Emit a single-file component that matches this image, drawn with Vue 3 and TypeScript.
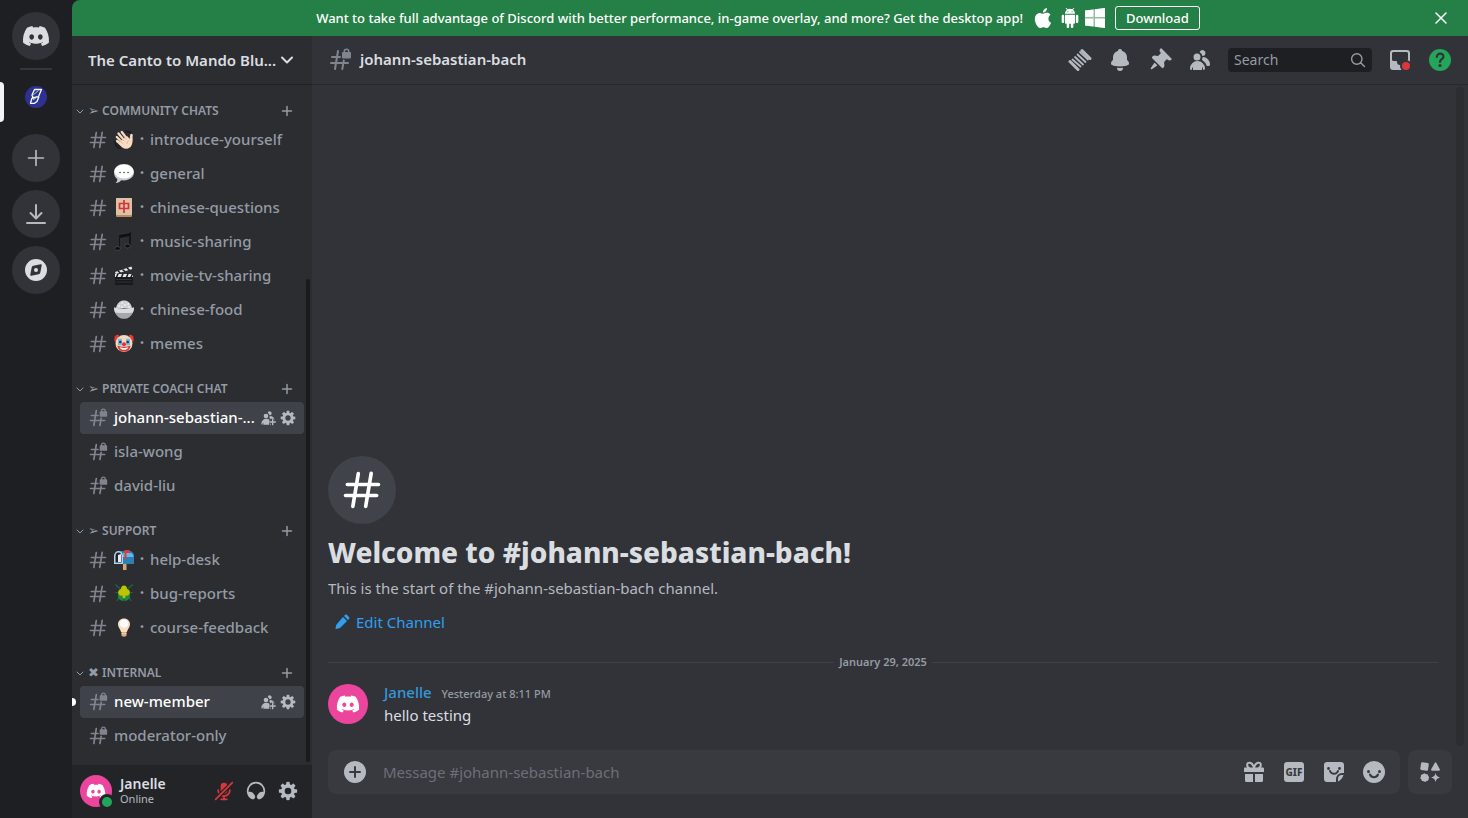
<script setup lang="ts">
import { ref } from 'vue'

interface Channel {
  name: string
  emoji?: string
  locked?: boolean
  active?: boolean
  unread?: boolean
}

interface Category {
  mark: string
  title: string
  channels: Channel[]
}

const categories: Category[] = [
  {
    mark: '➢',
    title: 'Community chats',
    channels: [
      { name: 'introduce-yourself', emoji: 'wave' },
      { name: 'general', emoji: 'speech' },
      { name: 'chinese-questions', emoji: 'tile' },
      { name: 'music-sharing', emoji: 'music' },
      { name: 'movie-tv-sharing', emoji: 'clapper' },
      { name: 'chinese-food', emoji: 'rice' },
      { name: 'memes', emoji: 'clown' },
    ],
  },
  {
    mark: '➢',
    title: 'Private coach chat',
    channels: [
      { name: 'johann-sebastian-...', locked: true, active: true },
      { name: 'isla-wong', locked: true },
      { name: 'david-liu', locked: true },
    ],
  },
  {
    mark: '➢',
    title: 'Support',
    channels: [
      { name: 'help-desk', emoji: 'mailbox' },
      { name: 'bug-reports', emoji: 'beetle' },
      { name: 'course-feedback', emoji: 'bulb' },
    ],
  },
  {
    mark: '✖',
    title: 'Internal',
    channels: [
      { name: 'new-member', locked: true, active: true, unread: true },
      { name: 'moderator-only', locked: true },
    ],
  },
]

const toolbar = [
  { icon: 'threads', label: 'Threads' },
  { icon: 'bell', label: 'Notification settings' },
  { icon: 'pin', label: 'Pinned messages' },
  { icon: 'members', label: 'Show member list' },
]

const composerActions = [
  { icon: 'sticker', label: 'Open sticker picker' },
  { icon: 'smile', label: 'Select emoji' },
]

const channelName = 'johann-sebastian-bach'
const query = ref('')
const draft = ref('')
</script>

<template>
  <svg class="sprite" aria-hidden="true">
    <defs>
      <mask id="add-cut" maskUnits="userSpaceOnUse" x="0" y="0" width="24" height="24">
        <rect width="24" height="24" fill="#fff" />
        <path d="M19 13v10M14 18h10" stroke="#000" stroke-width="5" />
      </mask>
      <mask id="mic-cut" maskUnits="userSpaceOnUse" x="0" y="0" width="24" height="24">
        <rect width="24" height="24" fill="#fff" />
        <path d="M2 22L22 2" stroke="#000" stroke-width="5" />
      </mask>
      <mask id="badge-cut" maskUnits="userSpaceOnUse" x="0" y="0" width="24" height="24">
        <rect width="24" height="24" fill="#fff" />
        <circle cx="18" cy="18" r="6" fill="#000" />
      </mask>
    </defs>
    <symbol id="i-logo" viewBox="0 0 24 24">
      <path d="M19.73 4.87a18.2 18.2 0 0 0-4.6-1.44c-.21.4-.4.8-.58 1.21-1.69-.25-3.4-.25-5.1 0-.18-.41-.37-.82-.59-1.2-1.6.27-3.14.75-4.6 1.43A19.04 19.04 0 0 0 .96 17.7a18.43 18.43 0 0 0 5.63 2.87c.46-.62.86-1.28 1.2-1.98-.65-.25-1.29-.55-1.9-.92.17-.12.32-.24.47-.37 3.58 1.7 7.7 1.7 11.28 0l.46.37c-.6.36-1.25.67-1.9.92.35.7.75 1.35 1.2 1.98 2.03-.63 3.94-1.6 5.64-2.87.47-4.87-.78-9.09-3.3-12.83ZM8.3 15.12c-1.1 0-2-1.02-2-2.27 0-1.24.88-2.26 2-2.26s2.02 1.02 2 2.26c0 1.25-.89 2.27-2 2.27Zm7.4 0c-1.1 0-2-1.02-2-2.27 0-1.24.88-2.26 2-2.26s2.02 1.02 2 2.26c0 1.25-.88 2.27-2 2.27Z" />
    </symbol>
    <symbol id="i-plus" viewBox="0 0 24 24">
      <path d="M12 3v18M3 12h18" fill="none" stroke="currentColor" stroke-width="2" stroke-linecap="round" />
    </symbol>
    <symbol id="i-plus-bold" viewBox="0 0 18 18">
      <path d="M9 4.500v9M4.500 9h9" fill="none" stroke="currentColor" stroke-width="1.500" stroke-linecap="round" />
    </symbol>
    <symbol id="i-download" viewBox="0 0 24 24">
      <path d="M12 3v13M6.500 11l5.500 5.500 5.500-5.500M3 21h18" fill="none" stroke="currentColor" stroke-width="2" stroke-linecap="round" stroke-linejoin="round" />
    </symbol>
    <symbol id="i-compass" viewBox="0 0 24 24">
      <path fill-rule="evenodd" d="M23 12a11 11 0 1 1-22 0 11 11 0 0 1 22 0ZM7.74 9.3A2 2 0 0 1 9.3 7.75l7.22-1.45a1 1 0 0 1 1.18 1.18l-1.45 7.22a2 2 0 0 1-1.57 1.57l-7.22 1.45a1 1 0 0 1-1.18-1.18L7.74 9.3Z" />
      <circle cx="12" cy="12" r="2" />
    </symbol>
    <symbol id="i-chevron" viewBox="0 0 18 18">
      <path d="M4 6.500l5 5 5-5" fill="none" stroke="currentColor" stroke-width="2" stroke-linecap="round" stroke-linejoin="round" />
    </symbol>
    <symbol id="i-chevron-small" viewBox="0 0 12 12">
      <path d="M3 5l3 3 3-3" fill="none" stroke="currentColor" stroke-linecap="round" stroke-linejoin="round" />
    </symbol>
    <symbol id="i-hash" viewBox="0 0 24 24">
      <path fill-rule="evenodd" d="M10.99 3.16A1 1 0 1 0 9 2.84L8.15 8H4a1 1 0 0 0 0 2h3.82l-.67 4H3a1 1 0 1 0 0 2h3.82l-.8 4.84a1 1 0 0 0 1.97.32L8.85 16h4.97l-.8 4.84a1 1 0 0 0 1.97.32l.86-5.16H20a1 1 0 1 0 0-2h-3.82l.67-4H21a1 1 0 1 0 0-2h-3.82l.8-4.84a1 1 0 1 0-1.97-.32L15.15 8h-4.97l.8-4.84ZM14.15 14l.67-4H9.85l-.67 4h4.97Z" />
    </symbol>
    <symbol id="i-hash-lock" viewBox="0 0 24 24">
      <path fill-rule="evenodd" d="M15.500 4v-.5a3 3 0 0 1 6 0V4h.5a1 1 0 0 1 1 1v4.500a1 1 0 0 1-1 1h-7a1 1 0 0 1-1-1V5a1 1 0 0 1 1-1Zm4.500-.5V4h-3v-.5a1.500 1.500 0 1 1 3 0Z" />
      <path d="M10 3L7 21M4 9h8M3 15h17M15.800 12.500l-1.500 8.500" fill="none" stroke="currentColor" stroke-width="2" stroke-linecap="round" />
    </symbol>
    <symbol id="i-gear" viewBox="0 0 24 24">
      <path fill-rule="evenodd" d="M10.56 1.1c-.46.05-.7.53-.64.98.18 1.16-.19 2.2-.98 2.53-.8.33-1.79-.15-2.49-1.1-.27-.36-.78-.52-1.14-.24-.77.59-1.45 1.27-2.04 2.04-.28.36-.12.87.24 1.14.96.7 1.43 1.7 1.1 2.49-.33.8-1.37 1.16-2.53.98-.45-.07-.93.18-.99.64a11.1 11.1 0 0 0 0 2.88c.06.46.54.7.99.64 1.16-.18 2.2.19 2.53.98.33.8-.14 1.79-1.1 2.49-.36.27-.52.78-.24 1.14.59.77 1.27 1.45 2.04 2.04.36.28.87.12 1.14-.24.7-.95 1.7-1.43 2.49-1.1.8.33 1.16 1.37.98 2.53-.07.45.18.93.64.99a11.1 11.1 0 0 0 2.88 0c.46-.06.7-.54.64-.99-.18-1.16.19-2.2.98-2.53.8-.33 1.79.14 2.49 1.1.27.36.78.52 1.14.24.77-.59 1.45-1.27 2.04-2.04.28-.36.12-.87-.24-1.14-.96-.7-1.43-1.7-1.1-2.49.33-.8 1.37-1.16 2.53-.98.45.07.93-.18.99-.64a11.1 11.1 0 0 0 0-2.88c-.06-.46-.54-.7-.99-.64-1.16.18-2.2-.19-2.53-.98-.33-.8.14-1.79 1.1-2.49.36-.27.52-.78.24-1.14a11.07 11.07 0 0 0-2.04-2.04c-.36-.28-.87-.12-1.14.24-.7.96-1.7 1.43-2.49 1.1-.8-.33-1.16-1.37-.98-2.53.07-.45-.18-.93-.64-.99a11.1 11.1 0 0 0-2.88 0ZM16 12a4 4 0 1 1-8 0 4 4 0 0 1 8 0Z" />
    </symbol>
    <symbol id="i-members" viewBox="0 0 24 24">
      <path d="M14.5 8a3 3 0 1 0-2.7-4.3c-.2.4.06.86.44 1.12a5 5 0 0 1 2.14 3.08c.01.06.06.1.12.1ZM18.44 17.27c.15.43.54.73 1 .73h1.06c.83 0 1.5-.67 1.5-1.5a7.5 7.5 0 0 0-6.5-7.43c-.55-.08-.99.38-1.1.92-.06.3-.15.6-.26.87-.23.58-.05 1.3.47 1.63a9.53 9.53 0 0 1 3.83 4.78ZM12.5 9a3.5 3.5 0 1 1-7 0 3.5 3.5 0 0 1 7 0ZM2 20.5a7.5 7.5 0 0 1 15 0c0 .83-.67 1.5-1.5 1.5a.2.2 0 0 1-.2-.16c-.2-.96-.56-1.87-.88-2.54-.1-.23-.42-.15-.42.1v2.1a.5.5 0 0 1-.5.5h-8a.5.5 0 0 1-.5-.5v-2.1c0-.25-.31-.33-.42-.1-.32.67-.67 1.58-.88 2.54a.2.2 0 0 1-.2.16A1.5 1.5 0 0 1 2 20.5Z" />
    </symbol>
    <symbol id="i-add-member" viewBox="0 0 24 24">
      <g mask="url(#add-cut)">
        <use href="#i-members" width="24" height="24" />
      </g>
      <path d="M19 14v8M15 18h8" fill="none" stroke="currentColor" stroke-width="2" stroke-linecap="round" />
    </symbol>
    <symbol id="i-threads" viewBox="0 0 24 24">
      <g fill="none" stroke="currentColor" stroke-linecap="round">
        <path d="M14 2.500l8 8M2 13.500l8 8" stroke-width="3" />
        <path d="M4.500 11.500l8 7M7 9l8 7.500M9.500 6.500l8 7.500M12 4l8 7.500" stroke-width="1.800" />
      </g>
    </symbol>
    <symbol id="i-bell" viewBox="0 0 24 24">
      <path d="M9.7 2.89c.18-.07.32-.24.37-.43a2 2 0 0 1 3.86 0c.05.2.19.36.38.43A7 7 0 0 1 19 9.5v2.09c0 .12.05.24.13.33l1.1 1.22a3 3 0 0 1 .77 2.01v.28c0 .67-.34 1.29-.95 1.56-1.31.6-4 1.51-8.05 1.51-4.05 0-6.74-.91-8.05-1.5-.61-.28-.95-.9-.95-1.57v-.28a3 3 0 0 1 .77-2l1.1-1.23a.5.5 0 0 0 .13-.33V9.5a7 7 0 0 1 4.7-6.61ZM9.18 19.84A.16.16 0 0 0 9 20a3 3 0 1 0 6 0c0-.1-.09-.17-.18-.16a24.86 24.86 0 0 1-5.64 0Z" />
    </symbol>
    <symbol id="i-pin" viewBox="0 0 24 24">
      <path d="M19.38 11.38a3 3 0 0 0 4.24 0l.03-.03a.5.5 0 0 0 0-.7L13.35.35a.5.5 0 0 0-.7 0l-.03.03a3 3 0 0 0 0 4.24L13 5l-2.92 2.92-3.65-.34a2 2 0 0 0-1.6.58l-.62.63a1 1 0 0 0 0 1.42l9.58 9.58a1 1 0 0 0 1.42 0l.63-.63a2 2 0 0 0 .58-1.6l-.34-3.64L19 11l.38.38ZM9.07 17.07a.5.5 0 0 1-.08.77l-5.15 3.43a.5.5 0 0 1-.63-.06l-.42-.42a.5.5 0 0 1-.06-.63L6.16 15a.5.5 0 0 1 .77-.08l2.14 2.14Z" />
    </symbol>
    <symbol id="i-search" viewBox="0 0 16 16">
      <path d="M12 7a5.200 5.200 0 1 1-10.400 0a5.200 5.200 0 0 1 10.400 0ZM10.700 10.700L14.500 14.500" fill="none" stroke="currentColor" stroke-width="1.400" stroke-linecap="round" />
    </symbol>
    <symbol id="i-inbox" viewBox="0 0 24 24">
      <path mask="url(#badge-cut)" fill-rule="evenodd" d="M5 2a3 3 0 0 0-3 3v14a3 3 0 0 0 3 3h14a3 3 0 0 0 3-3V5a3 3 0 0 0-3-3H5ZM4 5.5C4 4.670 4.670 4 5.500 4h13c.83 0 1.500.67 1.500 1.500v6c0 .83-.67 1.500-1.500 1.500h-2.650c-.5 0-.85.5-.85 1a3 3 0 1 1-6 0c0-.5-.35-1-.85-1H5.500A1.500 1.500 0 0 1 4 11.500v-6Z" />
      <circle cx="18" cy="18" r="4" fill="#da373c" />
    </symbol>
    <symbol id="i-help" viewBox="0 0 24 24">
      <circle cx="12" cy="12" r="11" />
      <path d="M8.800 9c0-4.600 6.800-4.200 6.600-.3-.1 2.600-3.400 2.500-3.400 5.300" fill="none" stroke="#313338" stroke-width="2.200" stroke-linecap="round" />
      <circle cx="12" cy="17.500" r="1.500" fill="#313338" />
    </symbol>
    <symbol id="i-close" viewBox="0 0 18 18">
      <path d="M4 4l10 10M14 4L4 14" fill="none" stroke="currentColor" stroke-width="1.500" stroke-linecap="round" />
    </symbol>
    <symbol id="i-apple" viewBox="0 0 24 24">
      <path d="M18.71 19.5c-.83 1.24-1.71 2.45-3.05 2.47-1.34.03-1.77-.79-3.29-.79-1.53 0-2 .77-3.27.82-1.31.05-2.3-1.32-3.14-2.53C4.25 17 2.94 12.45 4.7 9.39c.87-1.52 2.43-2.48 4.12-2.51 1.28-.02 2.5.87 3.29.87.78 0 2.26-1.07 3.81-.91.65.03 2.47.26 3.64 1.98-.09.06-2.17 1.28-2.15 3.81.03 3.02 2.65 4.03 2.68 4.04-.03.07-.42 1.44-1.38 2.83M13 3.5c.73-.83 1.94-1.46 2.94-1.5.13 1.17-.34 2.35-1.04 3.19-.69.85-1.83 1.51-2.95 1.42-.15-1.15.41-2.35 1.05-3.11z" />
    </symbol>
    <symbol id="i-android" viewBox="0 0 24 24">
      <path d="M6 18c0 .55.45 1 1 1h1v3.5c0 .83.67 1.5 1.5 1.5s1.5-.67 1.5-1.5V19h2v3.5c0 .83.67 1.5 1.5 1.5s1.5-.67 1.5-1.5V19h1c.55 0 1-.45 1-1V8H6v10zM3.5 8C2.67 8 2 8.67 2 9.5v7c0 .83.67 1.5 1.5 1.5S5 17.33 5 16.5v-7C5 8.67 4.33 8 3.5 8zm17 0c-.83 0-1.5.67-1.5 1.5v7c0 .83.67 1.5 1.5 1.5s1.5-.67 1.5-1.5v-7c0-.83-.67-1.5-1.5-1.5zm-4.97-5.84l1.3-1.3c.2-.2.2-.51 0-.71-.2-.2-.51-.2-.71 0l-1.48 1.48C13.85 1.23 12.95 1 12 1c-.96 0-1.86.23-2.66.63L7.85.15c-.2-.2-.51-.2-.71 0-.2.2-.2.51 0 .71l1.31 1.31C6.97 3.26 6 5.01 6 7h12c0-1.99-.97-3.75-2.47-4.84zM10 5H9V4h1v1zm5 0h-1V4h1v1z" />
    </symbol>
    <symbol id="i-windows" viewBox="0 0 20 20">
      <path opacity=".5" d="M0 2.500L20 0v20L0 17.500Z" />
      <path d="M0 2.500l8.500-1.100V9H0ZM10 1.200L20 0v9H10ZM0 10.500h8.500v8.100L0 17.500ZM10 10.500h10V20l-10-1.200Z" />
    </symbol>
    <symbol id="i-mic-off" viewBox="0 0 24 24">
      <g mask="url(#mic-cut)">
        <path d="M8 6a4 4 0 1 1 8 0v5a4 4 0 0 1-8 0V6Z" />
        <path d="M5 11a7 7 0 0 0 14 0M12 18v4M8.500 22h7" fill="none" stroke="currentColor" stroke-width="2" stroke-linecap="round" />
      </g>
      <path d="M2 22L22 2" stroke="currentColor" stroke-width="2" stroke-linecap="round" />
    </symbol>
    <symbol id="i-headphones" viewBox="0 0 24 24">
      <path d="M12 3a9 9 0 0 0-8.95 10h1.87a5 5 0 0 1 4.1 2.13l1.37 1.97a3.1 3.1 0 0 1-.17 3.78 2.85 2.85 0 0 1-3.55.74 11 11 0 1 1 10.66 0c-1.27.71-2.73.23-3.55-.74a3.1 3.1 0 0 1-.17-3.78l1.38-1.97a5 5 0 0 1 4.1-2.13h1.86A9 9 0 0 0 12 3Z" />
    </symbol>
    <symbol id="i-pencil" viewBox="0 0 16 16">
      <path d="M9 3l4 4-6.500 6.500c-1 1-2.500 1.200-5 1.500.3-2.500.5-4 1.500-5ZM10 2l1-1c.6-.6 1.500-.6 2.100 0l1.900 1.900c.6.6.6 1.500 0 2.100l-1 1Z" />
    </symbol>
    <symbol id="i-attach" viewBox="0 0 24 24">
      <circle cx="12" cy="12" r="11" />
      <path d="M12 7v10M7 12h10" stroke="#383a40" stroke-width="2" stroke-linecap="round" />
    </symbol>
    <symbol id="i-gift" viewBox="0 0 24 24">
      <path d="M12 8C10.500 1.500 5 1.500 5.200 5c0 1.500 1 3 2.600 3M12 8c1.500-6.500 7-6.500 6.800-3 0 1.500-1 3-2.600 3" fill="none" stroke="currentColor" stroke-width="2" />
      <path d="M3 7.500h18a1 1 0 0 1 1 1V12H2V8.500a1 1 0 0 1 1-1ZM3 14h8v8H4.500A1.500 1.500 0 0 1 3 20.500ZM13 14h8v6.500a1.500 1.500 0 0 1-1.500 1.500H13Z" />
    </symbol>
    <symbol id="i-sticker" viewBox="0 0 24 24">
      <path d="M5 2h14a3 3 0 0 1 3 3v8h-2a6 6 0 0 0-6 6v3H5a3 3 0 0 1-3-3V5a3 3 0 0 1 3-3ZM16 21.500V19a4 4 0 0 1 4-4h1.500c-1 3-3 5.500-5.500 6.500Z" />
      <path d="M8 11c1.500 3.800 6.500 3.800 8 0" fill="none" stroke="#383a40" stroke-width="2" stroke-linecap="round" />
      <circle cx="6.500" cy="8.500" r="1.400" fill="#383a40" />
      <circle cx="17.500" cy="8.500" r="1.400" fill="#383a40" />
    </symbol>
    <symbol id="i-smile" viewBox="0 0 24 24">
      <circle cx="12" cy="12" r="11" />
      <path d="M8 14.500c1.500 3.500 6.500 3.500 8 0" fill="none" stroke="#383a40" stroke-width="2" stroke-linecap="round" />
      <circle cx="6.500" cy="11.500" r="1.500" fill="#383a40" />
      <circle cx="17.500" cy="11.500" r="1.500" fill="#383a40" />
    </symbol>
    <symbol id="i-apps" viewBox="0 0 24 24">
      <path d="M4.300 2.200l5.500.8c.7.100 1.100.7 1 1.300l-.8 5.400c-.1.700-.7 1.100-1.300 1l-5.400-.8c-.7-.1-1.100-.7-1-1.300l.8-5.400c.1-.6.600-1 1.200-1ZM16.700 2.900c.4-.8 1.300-.8 1.700 0l3.400 6.300c.4.700-.1 1.500-.9 1.500h-6.800c-.8 0-1.300-.8-.9-1.500ZM6.500 13.200l1.400 1 1.700.1.600 1.600 1 1.300-.6 1.600-.3 1.700-1.700.5-1.400 1-1.500-.7-1.700-.2-.6-1.600-1.200-1.300.7-1.600.1-1.700 1.700-.6ZM17.600 13c.7 2.700 1.500 3.600 4.400 4.500-2.900.9-3.700 1.800-4.400 4.500-.7-2.700-1.500-3.600-4.400-4.500 2.900-.9 3.700-1.800 4.400-4.500Z" />
    </symbol>
    <symbol id="e-wave" viewBox="0 0 20 20">
      <path d="M1 12c.5 3 2 5 5 6M12 1.500c3-.5 5.500 1 6 4" fill="none" stroke="#1c1d20" stroke-width="2" stroke-linecap="round" />
      <g fill="none" stroke="#f7dbc2" stroke-linecap="round">
        <path d="M4.500 3.500l7 8.500M7.800 2l6 8M2.800 7l7 7M3 11l6 5" stroke-width="2.300" />
        <path d="M17.500 5l-.7 6" stroke-width="2.600" />
      </g>
      <path d="M7 11l6-5 3.500 3.500 2-1.500c.3 5-.3 9-4.500 10.500-4 1-6-1-9-4.500Z" fill="#f7dbc2" />
      <path d="M6 6.500l4 4.500M9.500 5.500l3 4M5 10l4 3.500M13 14c.2-2 1-3 2.500-4" fill="none" stroke="#d9a883" stroke-width=".6" />
    </symbol>
    <symbol id="e-speech" viewBox="0 0 20 20">
      <path d="M10 0c5.500 0 10 3.500 10 8.200s-4.500 8.200-10 8.200l-3 -.2C6 18 4 19 1.500 19c1.500-1.200 2-2.500 1.700-4C1.200 13.500 0 11 0 8.200 0 3.500 4.500 0 10 0Z" fill="#c9cbce" />
      <ellipse cx="10" cy="7.500" rx="9.500" ry="7" fill="#fff" />
      <path d="M6 8.500h.1M10 8.500h.1M14 8.500h.1" stroke="#4a4c50" stroke-width="1.600" stroke-linecap="round" />
    </symbol>
    <symbol id="e-tile" viewBox="0 0 20 20">
      <rect x="2" width="16" height="19" rx="1" fill="#b98d63" />
      <rect x="2" width="16" height="17" rx="1" fill="#dcc3a1" />
      <path d="M5.500 5.500h9v5h-9ZM10 2v13" fill="none" stroke="#d6323a" stroke-width="1.700" />
    </symbol>
    <symbol id="e-music" viewBox="0 0 20 20">
      <path d="M6 16V3l10-2v12" fill="none" stroke="#101114" stroke-width="1.600" />
      <path d="M6 3l10-2v3L6 6Z" fill="#101114" />
      <path d="M6.800 6v10M5.200 2.500l10.500-2" fill="none" stroke="#54565b" stroke-width=".5" />
      <ellipse cx="3.500" cy="16.500" rx="3" ry="2" fill="#101114" stroke="#5b5d62" stroke-width=".6" />
      <ellipse cx="13.500" cy="14" rx="3" ry="2" fill="#101114" stroke="#5b5d62" stroke-width=".6" />
    </symbol>
    <symbol id="e-clapper" viewBox="0 0 20 20">
      <rect x="1" y="8" width="18" height="11" rx="1" fill="#17181b" />
      <path d="M1 8h18v3H1ZM1 6L17.500.5l.8 2.500L1.800 8Z" fill="#e6e7e9" />
      <path d="M4 8l-1.500 3M9 8l-1.500 3M14 8l-1.500 3M18.500 8L17 11M4 5l2.500 2M8.500 3.500l2.500 2M13 2l2.500 2" stroke="#17181b" stroke-width="1.600" />
      <path d="M2 13.500h16M2 16h16" stroke="#3a3c40" stroke-width=".7" />
    </symbol>
    <symbol id="e-rice" viewBox="0 0 20 20">
      <path d="M2 8C3 3 6 .5 10 .5S17 3 18 8Z" fill="#cfd1d3" />
      <path d="M5 6h.1M8 3h.1M11 5h.1M14 4h.1M15 7h.1M8 7h.1" stroke="#fff" stroke-width="1.500" stroke-linecap="round" />
      <path d="M0 7.500c6 1.500 14 1.500 20 0 0 5-2.500 8.500-6 10.500 0 1-8 1-8 0-3.500-2-6-5.500-6-10.500Z" fill="#a5a7aa" />
      <path d="M0 7.500c6 1.500 14 1.500 20 0 0 2-.5 3.500-1.200 5-5 .8-12.600.8-17.600 0C.5 11 0 9.500 0 7.500Z" fill="#dadcdd" />
    </symbol>
    <symbol id="e-clown" viewBox="0 0 20 20">
      <path d="M5 1C2.500 0 0 2 .5 5c-.8 2 .8 4.500 3.500 4M15 1c2.500-1 5 1 4.500 4 .8 2-.8 4.500-3.500 4" fill="#e33b35" />
      <circle cx="10" cy="9.500" r="8.500" fill="#f3d9bf" />
      <path d="M5 5.500v5M7 5.500v5M13 5.500v5M15 5.500v5" stroke="#63b7e6" stroke-width="1.800" stroke-linecap="round" />
      <circle cx="6.300" cy="8" r="1.300" fill="#32373d" />
      <circle cx="13.700" cy="8" r="1.300" fill="#32373d" />
      <circle cx="10" cy="10.200" r="2" fill="#e3302e" />
      <path d="M3.500 11.500c3 1.800 10 1.800 13 0-.3 4-3 6-6.500 6s-6.200-2-6.500-6Z" fill="#d93a38" />
      <path d="M5.500 13.300c2.500 1 6.500 1 9 0-1 2-2.500 2.500-4.500 2.500s-3.500-.5-4.500-2.500Z" fill="#fff" />
    </symbol>
    <symbol id="e-mailbox" viewBox="0 0 20 20">
      <path d="M9 14h3.500v6H9Z" fill="#d8a67d" />
      <path d="M5 1h10c3 0 5 2 5 5v8H5Z" fill="#2d80b5" />
      <path d="M9 3h8c2 1 2.500 2 2.500 4H9Z" fill="#63b6e6" />
      <path d="M0 6c0-3 2-5 4.500-5S9 3 9 6v8H0Z" fill="#afd3e8" />
      <path d="M1.500 6.500c0-2.500 1-4 3-4s3 1.500 3 4v6h-6Z" fill="#20242a" />
      <path d="M4 5l3-1v8H4Z" fill="#e9eaec" />
      <path d="M10.500 0h5v3h-3v6h-2Z" fill="#e5383b" />
    </symbol>
    <symbol id="e-beetle" viewBox="0 0 20 20">
      <path d="M6.500 5L1.500.8M13.500 5l5-4.200M5 9L1.500 8.500M15 9l3.500-.5M5 13.500L3 16.500M15 13.500l2 3" fill="none" stroke="#1d6b3a" stroke-width="1.200" stroke-linecap="round" />
      <path d="M4 10c2 1 3 2 6 2s4-1 6-2c.5 4-1.500 7-6 7s-6.500-3-6-7Z" fill="#1f8a48" />
      <path d="M10 12v5" stroke="#14502a" />
      <path d="M10 1.500c2 0 3 1.500 3 3.500 2.500.5 3.500 3 2.500 5-1 1.800-3 2-4 1.500 0 2-.5 3-1.500 3s-1.500-1-1.500-3c-1 .5-3 .3-4-1.500-1-2 0-4.500 2.500-5 0-2 1-3.500 3-3.500Z" fill="#bfc400" />
    </symbol>
    <symbol id="e-bulb" viewBox="0 0 20 20">
      <path d="M10 .5c3.500 0 6 2.500 6 5.500 0 3.500-2.500 5-3 8H7c-.5-3-3-4.500-3-8C4 3 6.500.5 10 .5Z" fill="#f8dfc6" />
      <ellipse cx="10" cy="5.500" rx="4" ry="4" fill="#fff" />
      <path d="M7.500 14h5v3.500c0 1.500-5 1.500-5 0Z" fill="#e0ae80" />
      <path d="M7.500 15.500h5" stroke="#f1c9a2" />
    </symbol>
    <symbol id="i-server" viewBox="0 0 22 22">
      <circle cx="11" cy="11" r="11" fill="#2e3192" />
      <path d="M9.500 3.500h7L13.500 10.500 8 12 7 9ZM14 10.500l-2 5-2.500 1.800H5.500L6.800 12.500l2-1.500" fill="none" stroke="#fff" stroke-width="1.300" stroke-linejoin="round" />
      <path d="M7.500 9.500l6-5M8 14l5.500-4" stroke="#8fd3d1" />
    </symbol>
  </svg>

  <div class="app">
    <nav class="rail" aria-label="Servers">
      <button class="guild" aria-label="Direct messages"><svg class="s28"><use href="#i-logo" /></svg></button>
      <span class="rail-line"></span>
      <button class="guild current" aria-label="The Canto to Mando Blueprint"><svg class="s22"><use href="#i-server" /></svg></button>
      <button class="guild spaced" aria-label="Add a server"><svg class="s20"><use href="#i-plus" /></svg></button>
      <button class="guild" aria-label="Download apps"><svg class="s24"><use href="#i-download" /></svg></button>
      <button class="guild bright" aria-label="Discover"><svg class="s24"><use href="#i-compass" /></svg></button>
    </nav>

    <div class="workspace">
      <div class="banner">
        <p class="banner-text">Want to take full advantage of Discord with better performance, in-game overlay, and more? Get the desktop app!</p>
        <span class="platforms">
          <svg class="s24"><use href="#i-apple" /></svg>
          <svg class="s20"><use href="#i-android" /></svg>
          <svg class="s20"><use href="#i-windows" /></svg>
        </span>
        <button class="download">Download</button>
        <button class="banner-close" aria-label="Close"><svg class="s18"><use href="#i-close" /></svg></button>
      </div>

      <div class="columns">
        <aside class="sidebar">
          <button class="server-head">
            <span>The Canto to Mando Blu...</span>
            <svg class="s18"><use href="#i-chevron" /></svg>
          </button>

          <div class="channels">
            <section v-for="cat in categories" :key="cat.title">
              <header class="category">
                <svg class="s12"><use href="#i-chevron-small" /></svg>
                <h2><span class="mark">{{ cat.mark }}</span> {{ cat.title }}</h2>
                <button class="icon-button" aria-label="Create channel"><svg class="s18"><use href="#i-plus-bold" /></svg></button>
              </header>
              <ul>
                <li v-for="ch in cat.channels" :key="ch.name" class="row" :class="{ active: ch.active, unread: ch.unread }">
                  <a href="#" class="channel">
                    <svg class="s20 hash"><use :href="ch.locked ? '#i-hash-lock' : '#i-hash'" /></svg>
                    <svg v-if="ch.emoji" class="s20"><use :href="'#e-' + ch.emoji" /></svg>
                    <span v-if="ch.emoji" class="dot">・</span>
                    <span class="name">{{ ch.name }}</span>
                  </a>
                  <template v-if="ch.active">
                    <button class="icon-button" aria-label="Invite to channel"><svg class="s16"><use href="#i-add-member" /></svg></button>
                    <button class="icon-button" aria-label="Channel settings"><svg class="s16"><use href="#i-gear" /></svg></button>
                  </template>
                </li>
              </ul>
            </section>
            <span class="side-thumb"></span>
          </div>

          <div class="user">
            <span class="avatar small">
              <svg class="s20"><use href="#i-logo" /></svg>
              <span class="status"></span>
            </span>
            <div class="user-text">
              <strong>Janelle</strong>
              <span>Online</span>
            </div>
            <button class="icon-button muted" aria-label="Unmute"><svg class="s20"><use href="#i-mic-off" /></svg></button>
            <button class="icon-button" aria-label="Deafen"><svg class="s20"><use href="#i-headphones" /></svg></button>
            <button class="icon-button" aria-label="User settings"><svg class="s20"><use href="#i-gear" /></svg></button>
          </div>
        </aside>

        <main class="main">
          <header class="topbar">
            <svg class="s24 hash"><use href="#i-hash-lock" /></svg>
            <h1>{{ channelName }}</h1>
            <div class="tools">
              <button v-for="t in toolbar" :key="t.icon" class="icon-button" :aria-label="t.label">
                <svg class="s24"><use :href="'#i-' + t.icon" /></svg>
              </button>
              <label class="search">
                <input v-model="query" type="text" placeholder="Search" aria-label="Search" />
                <svg class="s16"><use href="#i-search" /></svg>
              </label>
              <button class="icon-button" aria-label="Inbox"><svg class="s24"><use href="#i-inbox" /></svg></button>
              <button class="icon-button help" aria-label="Help"><svg class="s24"><use href="#i-help" /></svg></button>
            </div>
          </header>

          <div class="chat">
            <div class="intro">
              <span class="big-hash"><svg class="s44"><use href="#i-hash" /></svg></span>
              <h2>Welcome to #{{ channelName }}!</h2>
              <p>This is the start of the #{{ channelName }} channel.</p>
              <button class="edit"><svg class="s16"><use href="#i-pencil" /></svg>Edit Channel</button>
            </div>
            <div class="divider"><span>January 29, 2025</span></div>
            <article class="message">
              <span class="avatar"><svg class="s24"><use href="#i-logo" /></svg></span>
              <div>
                <h3>Janelle <time>Yesterday at 8:11 PM</time></h3>
                <p>hello testing</p>
              </div>
            </article>
            <span class="chat-track"></span>
          </div>

          <form class="composer" @submit.prevent>
            <div class="compose-box">
              <button type="button" class="icon-button" aria-label="Attach"><svg class="s24"><use href="#i-attach" /></svg></button>
              <input v-model="draft" type="text" :placeholder="'Message #' + channelName" aria-label="Message" />
              <button type="button" class="icon-button" aria-label="Send a gift"><svg class="s24"><use href="#i-gift" /></svg></button>
              <button type="button" class="gif" aria-label="Open GIF picker">GIF</button>
              <button v-for="a in composerActions" :key="a.icon" type="button" class="icon-button" :aria-label="a.label">
                <svg class="s24"><use :href="'#i-' + a.icon" /></svg>
              </button>
            </div>
            <button type="button" class="apps" aria-label="Apps"><svg class="s24"><use href="#i-apps" /></svg></button>
          </form>
        </main>
      </div>
    </div>
  </div>
</template>

<style>
body {
  margin: 0;
  background: #1e1f22;
}
</style>

<style scoped>
.app {
  display: flex;
  height: 100vh;
  overflow: hidden;
  background: #1e1f22;
  color: #dbdee1;
  font-family: "Noto Sans", "Noto Sans CJK JP", "DejaVu Sans", sans-serif;
  font-size: 15px;
  line-height: 20px;
}
.sprite {
  position: absolute;
  width: 0;
  height: 0;
}
svg {
  display: block;
  flex: none;
  fill: currentColor;
}
.s12 { width: 12px; height: 12px; }
.s16 { width: 16px; height: 16px; }
.s18 { width: 18px; height: 18px; }
.s20 { width: 20px; height: 20px; }
.s22 { width: 22px; height: 22px; }
.s24 { width: 24px; height: 24px; }
.s28 { width: 28px; height: 28px; }
.s44 { width: 44px; height: 44px; }
h1, h2, h3, p, ul {
  margin: 0;
  padding: 0;
  list-style: none;
}
button, input {
  margin: 0;
  padding: 0;
  border: 0;
  background: none;
  color: inherit;
  font: inherit;
}
.icon-button {
  display: flex;
  flex: none;
  color: #b5bac1;
}

/* Server rail */
.rail {
  display: flex;
  flex: none;
  flex-direction: column;
  align-items: center;
  gap: 8px;
  width: 72px;
  padding-top: 12px;
  box-sizing: border-box;
}
.guild {
  display: grid;
  place-items: center;
  width: 48px;
  height: 48px;
  border-radius: 50%;
  background: #313338;
  color: #b5bac1;
}
.guild:first-child,
.guild.bright {
  color: #dbdee1;
}
.rail-line {
  width: 32px;
  height: 2px;
  background: #35363c;
}
.guild.current {
  position: relative;
  width: 72px;
  height: 40px;
  padding-bottom: 2px;
  border-radius: 0;
  background: none;
}
.guild.current::before {
  content: "";
  position: absolute;
  top: 4px;
  left: 0;
  width: 4px;
  height: 40px;
  border-radius: 0 4px 4px 0;
  background: #f2f3f5;
}
.guild.spaced {
  margin-top: 8px;
}

/* Banner */
.workspace {
  display: flex;
  flex: 1;
  flex-direction: column;
  min-width: 0;
}
.banner {
  position: relative;
  display: flex;
  flex: none;
  align-items: center;
  justify-content: center;
  gap: 10px;
  height: 36px;
  padding-right: 24px;
  border-radius: 8px 0 0 0;
  background: #248046;
  color: #fff;
  font-size: 13px;
  font-weight: 500;
}
.banner-text {
  white-space: nowrap;
}
.platforms {
  display: flex;
  align-items: center;
  gap: 5px;
  margin-left: -2px;
}
.download {
  height: 24px;
  padding: 0 10px;
  border: 1px solid #fff;
  border-radius: 3px;
  line-height: 20px;
}
.banner-close {
  position: absolute;
  top: 9px;
  right: 18px;
}
.columns {
  display: flex;
  flex: 1;
  min-height: 0;
}

/* Channel sidebar */
.sidebar {
  display: flex;
  flex: none;
  flex-direction: column;
  width: 240px;
  background: #2b2d31;
}
.server-head {
  display: flex;
  flex: none;
  align-items: center;
  justify-content: space-between;
  height: 49px;
  padding: 0 16px;
  border-bottom: 1px solid #202225;
  box-sizing: border-box;
  font-weight: 600;
  text-align: left;
  white-space: nowrap;
}
.channels {
  position: relative;
  flex: 1;
  min-height: 0;
  overflow: hidden;
  padding-right: 8px;
  color: #949ba4;
}
.category {
  display: flex;
  align-items: center;
  gap: 2px;
  height: 24px;
  padding: 16px 8px 0 2px;
}
section:first-child .category {
  padding-top: 14px;
}
.category h2 {
  flex: 1;
  font-size: 12px;
  font-weight: 600;
  text-transform: uppercase;
  white-space: nowrap;
}
.mark {
  font-family: "DejaVu Sans", sans-serif;
  font-size: 13px;
}
.category .icon-button {
  color: #949ba4;
}
.row {
  position: relative;
  display: flex;
  align-items: center;
  gap: 4px;
  height: 32px;
  margin: 1px 0 1px 8px;
  padding: 0 8px;
  border-radius: 4px;
}
section li:not(:last-child) {
  margin-bottom: 2px;
}
.channel {
  display: flex;
  flex: 1;
  align-items: center;
  min-width: 0;
  color: inherit;
  font-weight: 500;
  text-decoration: none;
}
.name {
  padding-bottom: 2px;
  white-space: nowrap;
}
.hash {
  color: #80848e;
}
.channel .hash {
  margin-right: 6px;
}
.dot {
  width: 16px;
  font-size: 12px;
  text-align: center;
}
.row.active {
  background: #404249;
}
.row.active .channel {
  color: #fff;
}
.row.active .hash {
  color: #80848e;
}
.row.unread::before {
  content: "";
  position: absolute;
  left: -8px;
  width: 4px;
  height: 8px;
  border-radius: 0 4px 4px 0;
  background: #fff;
}
.side-thumb {
  position: absolute;
  top: 194px;
  right: 2px;
  bottom: 3px;
  width: 4px;
  border-radius: 4px;
  background: #1a1b1e;
}
.user {
  display: flex;
  flex: none;
  align-items: center;
  gap: 12px;
  height: 53px;
  padding: 0 14px 2px 8px;
  box-sizing: border-box;
  background: #232428;
}
.avatar {
  position: relative;
  display: grid;
  flex: none;
  place-items: center;
  width: 40px;
  height: 40px;
  border-radius: 50%;
  background: #eb459e;
  color: #fff;
}
.avatar.small {
  width: 32px;
  height: 32px;
  margin-right: -4px;
}
.status {
  position: absolute;
  right: -3px;
  bottom: -3px;
  width: 10px;
  height: 10px;
  border: 3px solid #232428;
  border-radius: 50%;
  background: #23a55a;
}
.user-text {
  flex: 1;
  font-size: 14px;
  line-height: 16px;
}
.user-text strong {
  display: block;
  font-weight: 600;
}
.user-text span {
  display: block;
  color: #b5bac1;
  font-size: 11px;
  line-height: 13px;
}
.muted {
  color: #da373c;
}

/* Conversation */
.main {
  display: flex;
  flex: 1;
  flex-direction: column;
  min-width: 0;
  background: #313338;
}
.topbar {
  display: flex;
  flex: none;
  align-items: center;
  gap: 8px;
  height: 49px;
  padding: 0 16px;
  border-bottom: 1px solid #27292d;
  box-sizing: border-box;
}
.topbar h1 {
  flex: 1;
  padding-bottom: 2px;
  font-size: 15px;
  font-weight: 600;
}
.tools {
  display: flex;
  align-items: center;
  gap: 16px;
}
.search {
  display: flex;
  align-items: center;
  width: 144px;
  height: 24px;
  padding: 0 6px;
  border-radius: 4px;
  box-sizing: border-box;
  background: #1e1f22;
  color: #949ba4;
}
.search input {
  flex: 1;
  min-width: 0;
  font-size: 14px;
}
input {
  outline: 0;
}
input::placeholder {
  color: #949ba4;
  opacity: 1;
}
.help {
  color: #23a55a;
}
.chat {
  position: relative;
  display: flex;
  flex: 1;
  flex-direction: column;
  justify-content: flex-end;
  min-height: 0;
  padding: 0 30px 24px 16px;
}
.big-hash {
  display: grid;
  place-items: center;
  width: 68px;
  height: 68px;
  border-radius: 50%;
  background: #41434a;
  color: #fff;
}
.intro h2 {
  margin: 8px 0 6px;
  font-size: 28px;
  font-weight: 800;
  line-height: 40px;
}
.intro p {
  color: #b5bac1;
}
.edit {
  display: flex;
  align-items: center;
  gap: 6px;
  margin-top: 8px;
  padding: 6px;
  color: #2f9ff0;
}
.divider {
  display: flex;
  align-items: center;
  gap: 5px;
  margin: 14px 0 10px;
  color: #949ba4;
  font-size: 11px;
  font-weight: 600;
}
.divider::before,
.divider::after {
  content: "";
  flex: 1;
  height: 1px;
  background: #3f4147;
}
.message {
  display: flex;
  gap: 16px;
}
.message .avatar {
  margin-top: 2px;
}
.message h3 {
  color: #3498db;
  font-size: 15px;
  font-weight: 500;
}
.message time {
  margin-left: 6px;
  color: #949ba4;
  font-size: 11px;
}
.message p {
  line-height: 22px;
}
.chat-track {
  position: absolute;
  top: 2px;
  right: 4px;
  bottom: 4px;
  width: 8px;
  border-radius: 4px;
  background: #2b2d31;
}
.composer {
  display: flex;
  flex: none;
  gap: 8px;
  padding: 0 16px 24px;
}
.compose-box {
  display: flex;
  flex: 1;
  align-items: center;
  gap: 16px;
  height: 44px;
  padding: 0 14px 0 15px;
  border-radius: 8px;
  background: #383a40;
}
.compose-box input {
  flex: 1;
  min-width: 0;
}
.compose-box input::placeholder {
  color: #6d6f78;
}
.gif {
  width: 20px;
  height: 20px;
  margin: 0 2px;
  border-radius: 3px;
  background: #b5bac1;
  color: #383a40;
  font-size: 10px;
  font-weight: 800;
  text-align: center;
}
.apps {
  display: grid;
  place-items: center;
  width: 44px;
  height: 44px;
  border-radius: 8px;
  background: #383a40;
  color: #b5bac1;
}
</style>
